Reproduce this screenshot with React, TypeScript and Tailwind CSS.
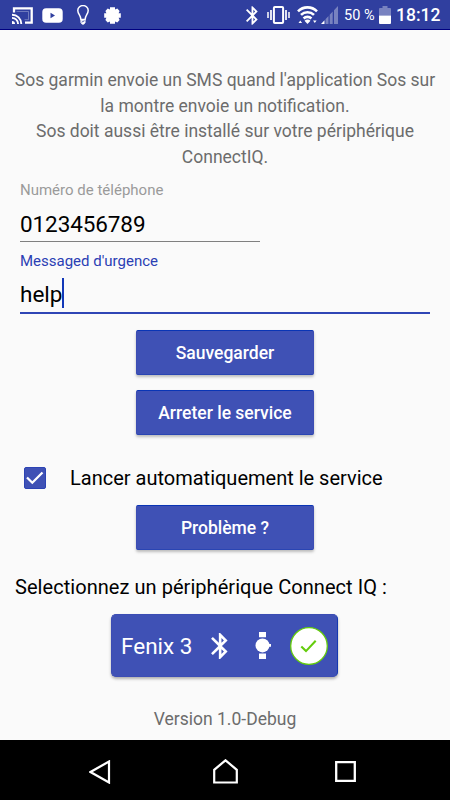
import { useState } from 'react';
import type { ReactNode } from 'react';

function StatusBar() {
  return (
    <header className="flex h-[30px] items-center border-b border-[#000080] bg-[#303f9f] pt-px pr-[9px] pl-3 text-white">
      <svg className="h-[17px] w-[21px]" viewBox="0 0 21 17" fill="none" stroke="currentColor">
        <path d="M2 5.500V1.300h17.700v14.400H13" strokeWidth="2.300" />
        <path d="M0 14a3 3 0 0 1 3 3H0z" fill="currentColor" stroke="none" />
        <path d="M0 10.900A6.100 6.100 0 0 1 6.100 17M0 7.700A9.300 9.300 0 0 1 9.300 17" strokeWidth="1.900" />
        <path d="M4.500 4.500h12v8.200h-4" strokeWidth="1" opacity=".3" />
      </svg>
      <svg className="ml-[9px] h-[15px] w-[21px]" viewBox="0 0 21 15">
        <rect x=".3" y=".2" width="20.400" height="14.600" rx="3.800" fill="currentColor" />
        <path d="M8.500 4.800v5.400l4.500-2.700z" fill="#303f9f" />
      </svg>
      <svg className="ml-3.5 h-5 w-3" viewBox="0 0 12 20" fill="none" stroke="currentColor" strokeWidth="1.500">
        <path d="M3.900 14.500C3.900 10.500.8 9 .8 5.600a5.200 5 0 0 1 10.400 0c0 3.400-3.100 4.900-3.100 8.900z" />
        <path d="M3.800 15.200h4.400v2.300L7 19.200H5l-1.200-1.700z" fill="currentColor" strokeWidth=".6" />
        <path d="M4.500 17.200l3-1.400" stroke="#303f9f" strokeWidth=".8" />
      </svg>
      <svg className="ml-[15px] h-[17px] w-[17px]" viewBox="0 0 17 17" fill="currentColor">
        <path d="M6 .3h5v2.200l2.300-.9 2.300 2.300-1 2.300h2.200v4.600h-2.200l1 2.300-2.300 2.300-2.300-.9v2.200H6v-2.200l-2.300.9-2.300-2.300 1-2.300H.2V6.200h2.200l-1-2.300 2.300-2.300 2.300.9z" />
      </svg>

      <div className="ml-auto flex items-center">
        <BluetoothIcon className="h-[19px] w-[12px]" />
        <svg className="ml-[9px] h-[18px] w-[23px]" viewBox="0 0 23 18" fill="none" stroke="currentColor">
          <rect x="6.900" y="1" width="9.200" height="16" rx="1" strokeWidth="2" />
          <path d="M4 4v10M19 4v10" strokeWidth="1.700" />
          <path d="M1 6v6M22 6v6" strokeWidth="1.500" />
        </svg>
        <svg className="ml-[7px] h-[18px] w-[21px]" viewBox="0 0 21 18" fill="none" stroke="currentColor" strokeWidth="2.600">
          <path d="M1 5.300a13.400 13.400 0 0 1 19 0M4 8.900a9.200 9.200 0 0 1 13 0M6.600 12.500a5.500 5.500 0 0 1 7.800 0" />
          <path d="M10.500 18l-3-3.200a4.200 4.200 0 0 1 6 0z" fill="currentColor" stroke="none" />
          <path d="M1.500 17l1.800-2.500L5.100 17zM16 14.500l1.800 2.500 1.800-2.500z" fill="currentColor" stroke="none" />
        </svg>
        <svg className="ml-[3px] h-[18px] w-[17px]" viewBox="0 0 17 18" fill="currentColor">
          <path d="M0 18l3.500-3.700V18z" />
          <path d="M4.500 18v-4.800l3-3.200v8zM8.700 18V8.800l3-3.200V18zM13 18V4.300L17 0v18z" opacity=".35" />
        </svg>
        <span className="ml-1.5 w-[31px] pt-px text-[14.500px] leading-5 whitespace-nowrap">50 %</span>
        <svg className="ml-[4px] h-[18px] w-3" viewBox="0 0 12 18" fill="currentColor">
          <path d="M0 9.500V3q0-1 1-1h2.500V0h5v2H11q1 0 1 1v6.500z" opacity=".35" />
          <path d="M0 9.500h12V17q0 1-1 1H1q-1 0-1-1z" />
        </svg>
        <span className="ml-[5px] w-[45px] text-[17.500px] leading-5 font-medium whitespace-nowrap">18:12</span>
      </div>
    </header>
  );
}

function BluetoothIcon({ className }: { className: string }) {
  return (
    <svg className={className} viewBox="5 2 13 20" fill="currentColor">
      <path d="M17.710 7.710L12 2h-1v7.590L6.410 5 5 6.410 10.590 12 5 17.590 6.410 19 11 14.410V22h1l5.710-5.710-4.300-4.290 4.300-4.290zM13 5.830l1.880 1.880L13 9.590V5.830zm1.880 10.460L13 18.170v-3.760l1.880 1.880z" />
    </svg>
  );
}

function Button({ children, onClick }: { children: ReactNode; onClick?: () => void }) {
  return (
    <button
      className="mx-auto block h-[45px] w-[178px] rounded-[2px] border border-[#3c4db4] border-t-[#0a35b5] border-b-[#2a45b3] bg-[#3f51b5] pt-px text-[17.500px] leading-[43px] font-medium whitespace-nowrap text-white shadow-[0_2px_3px_rgba(0,0,0,0.25)]"
      onClick={onClick}
    >
      {children}
    </button>
  );
}

function DeviceCard() {
  return (
    <div className="mt-[13px] ml-[111px] flex h-[63px] w-[227px] items-center rounded-[5px] border border-[#3c4db4] border-r-[#1438b0] bg-[#3f51b5] pt-px pl-[9px] text-white shadow-[0_2px_3px_rgba(0,0,0,0.3)]">
      <span className="w-[72px] pt-px text-[22.500px] leading-7 whitespace-nowrap">Fenix 3</span>
      <BluetoothIcon className="ml-[18px] h-[26px] w-[17px]" />
      <svg className="ml-[27px] h-[27px] w-4" viewBox="0 0 16 27" fill="currentColor">
        <path d="M4 0h7v5.300H4zM4 21.500h7V27H4z" />
        <circle cx="7.500" cy="13.400" r="7" />
        <path d="M14 12h2v2.800h-2z" />
      </svg>
      <svg className="ml-[19px] h-[38px] w-[38px]" viewBox="0 0 38 38" fill="none">
        <circle cx="19" cy="19" r="18.300" fill="#fff" stroke="#64cc0c" strokeWidth="1.300" />
        <path d="M11.300 19.500l4.700 4.600 9.700-10.300" stroke="#64cc0c" strokeWidth="2.100" />
      </svg>
    </div>
  );
}

function NavigationBar() {
  return (
    <nav className="flex h-[60px] items-center bg-black pt-[3px] text-white">
      <svg className="ml-[89px] h-6 w-[22px]" viewBox="0 0 22 24" fill="none" stroke="currentColor" strokeWidth="2.200">
        <path d="M20 1.500v21L1.500 12z" />
      </svg>
      <svg className="ml-[102px] h-[25px] w-[25px]" viewBox="0 0 25 25" fill="none" stroke="currentColor" strokeWidth="2.200">
        <path d="M1.200 23.500V10.800L12.500 1.300l11.300 9.500v12.700z" />
      </svg>
      <svg className="ml-[97px] h-[21px] w-[21px]" viewBox="0 0 21 21" fill="none" stroke="currentColor" strokeWidth="2.300">
        <path d="M1.200 1.200h18.600v18.600H1.200z" />
      </svg>
    </nav>
  );
}

export default function App() {
  const [phone, setPhone] = useState('0123456789');
  const [autoStart, setAutoStart] = useState(true);

  return (
    <div className="flex h-[800px] w-[450px] flex-col overflow-hidden bg-[#fafafa] font-[Roboto,sans-serif] text-black">
      <StatusBar />

      <main className="flex-1">
        <p className="mt-[38px] text-center text-[17.500px] leading-[25.700px] whitespace-nowrap text-[#6c6c6c]">
          Sos garmin envoie un SMS quand l'application Sos sur
          <br />
          la montre envoie un notification.
          <br />
          Sos doit aussi être installé sur votre périphérique
          <br />
          ConnectIQ.
        </p>

        <div className="mx-5 mt-[9px]">
          <label className="block text-[15px] leading-5 text-[#9a9a9a]" htmlFor="phone">
            Numéro de téléphone
          </label>
          <input
            id="phone"
            className="mt-[9px] block h-[33px] w-60 border-b border-[#808080] pb-[2px] text-[22.500px] leading-7 tracking-[-0.100px] outline-none"
            value={phone}
            onChange={(e) => setPhone(e.target.value)}
          />
          <p className="mt-[9px] text-[15px] leading-5 text-[#2a40b4]">Messaged d'urgence</p>
          <div className="mt-[7px] flex h-9 items-start border-b-2 border-[#2f45b5] text-[22.500px] leading-8">
            <span>help</span>
            <span className="h-[30px] w-[2px] bg-[#1238b8]" />
          </div>
        </div>

        <div className="mt-4 space-y-[15px]">
          <Button>Sauvegarder</Button>
          <Button>Arreter le service</Button>
        </div>

        <label className="mt-[28px] mb-[12px] ml-6 flex h-[30px] items-center">
          <input type="checkbox" className="sr-only" checked={autoStart} onChange={() => setAutoStart(!autoStart)} />
          <svg className="h-[22px] w-[22px] rounded-[2px] border border-[#2c43b4] bg-[#3f51b5]" viewBox="0 0 20 20" fill="none">
            {autoStart ? <path d="M2 9.500l5.300 5.200L17.500 4.500" stroke="#fff" strokeWidth="2.300" /> : null}
          </svg>
          <span className="ml-6 text-[20px] leading-[30px] whitespace-nowrap">Lancer automatiquement le service</span>
        </label>
        <Button>Problème ?</Button>

        <p className="mt-[23px] ml-[15px] text-[20px] leading-7 tracking-[0.050px] whitespace-nowrap">
          Selectionnez un périphérique Connect IQ :
        </p>
        <DeviceCard />
        <p className="mt-[30px] text-center text-[17.500px] leading-6 text-[#6c6c6c]">Version 1.0-Debug</p>
      </main>

      <NavigationBar />
    </div>
  );
}
